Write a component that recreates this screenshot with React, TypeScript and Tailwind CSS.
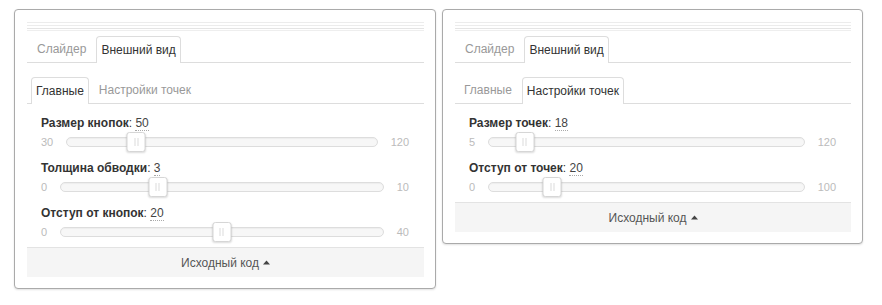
import React from "react";

type S = { label: string; value: number; min: number; max: number };

function Slider({ s, last }: { s: S; last: boolean }) {
  const frac = (s.value - s.min) / (s.max - s.min);
  return (
    <div className={last ? "mb-[6px]" : "mb-[8px]"}>
      <div className="h-[17px] leading-[17px] text-[12px] text-[#333]">
        <span className="font-bold">{s.label}</span>
        <span>: </span>
        <span className="border-b border-dotted border-[#aaa] text-[#444]">{s.value}</span>
      </div>
      <div className="flex h-[20px] items-center gap-[13px] text-[11px] text-[#bbb]">
        <span className="leading-[20px]">{s.min}</span>
        <div className="relative h-[10px] flex-1 rounded-full border border-[#ddd] bg-[#f7f7f7] shadow-[inset_0_1px_1px_rgba(0,0,0,0.04)]">
          <div
            className="absolute top-[-6px] flex h-[20px] w-[19px] -translate-x-1/2 items-center justify-center gap-[2px] rounded-[3px] border border-[#d6d6d6] bg-white shadow-[0_1px_2px_rgba(0,0,0,0.14)]"
            style={{ left: `${frac * 100}%` }}
          >
            <span className="h-[8px] w-px bg-[#dcdcdc]" />
            <span className="h-[8px] w-px bg-[#dcdcdc]" />
          </div>
        </div>
        <span className="leading-[20px]">{s.max}</span>
      </div>
    </div>
  );
}

function Tabs({ items, active, ml }: { items: string[]; active: number; ml: string }) {
  return (
    <div className="flex h-[27px] border-b border-[#ddd]">
      <div className={`flex gap-[5px] ${ml}`}>
        {items.map((t, i) =>
          i === active ? (
            <div
              key={t}
              className="-mb-px flex h-[27px] items-center rounded-t-[4px] border border-b-0 border-[#ddd] bg-white px-[4px] text-[12px] text-[#333]"
            >
              {t}
            </div>
          ) : (
            <div key={t} className="flex h-[26px] items-center px-[5px] text-[12px] text-[#999]">
              {t}
            </div>
          )
        )}
      </div>
    </div>
  );
}

function Card({ width, sub, sliders }: { width: string; sub: number; sliders: S[] }) {
  return (
    <div
      className={`${width} rounded-[4px] border border-[#aaa] bg-white pb-[11px] pl-[12px] pr-[11px] pt-[12px] shadow-[0_1px_2px_rgba(0,0,0,0.12)]`}
    >
      <div>
        <div className="h-px bg-[#ececec]" />
        <div className="mt-[2px] h-px bg-[#ececec]" />
        <div className="mt-[2px] h-px bg-[#e4e4e4]" />
        <div className="mt-px h-px bg-[#eeeeee]" />
      </div>
      <div className="mt-[5px]">
        <Tabs items={["Слайдер", "Внешний вид"]} active={1} ml="ml-[5px]" />
      </div>
      <div className="mt-[14px]">
        <Tabs items={["Главные", "Настройки точек"]} active={sub} ml="ml-[4px]" />
      </div>
      <div className="mt-[11px] pl-[14px] pr-[15px]">
        {sliders.map((s, i) => (
          <Slider key={s.label} s={s} last={i === sliders.length - 1} />
        ))}
      </div>
      <div className="-mt-px border-t border-[#e3e3e3] bg-[#f5f5f5]">
        <div className="flex h-[29px] items-center justify-center gap-[4px] text-[12px] text-[#555]">
          <span>Исходный код</span>
          <svg width="7" height="5" viewBox="0 0 7 5">
            <path d="M0 4.5 L3.5 0.5 L7 4.5 Z" fill="#444" />
          </svg>
        </div>
      </div>
    </div>
  );
}

export default function App() {
  return (
    <div
      className="flex h-[305px] w-[882px] items-start gap-[6px] bg-white pl-[14px] pt-[9px]"
      style={{ fontFamily: '"Liberation Sans", Arial, sans-serif' }}
    >
      <Card
        width="w-[422px]"
        sub={0}
        sliders={[
          { label: "Размер кнопок", value: 50, min: 30, max: 120 },
          { label: "Толщина обводки", value: 3, min: 0, max: 10 },
          { label: "Отступ от кнопок", value: 20, min: 0, max: 40 },
        ]}
      />
      <Card
        width="w-[421px]"
        sub={1}
        sliders={[
          { label: "Размер точек", value: 18, min: 5, max: 120 },
          { label: "Отступ от точек", value: 20, min: 0, max: 100 },
        ]}
      />
    </div>
  );
}
